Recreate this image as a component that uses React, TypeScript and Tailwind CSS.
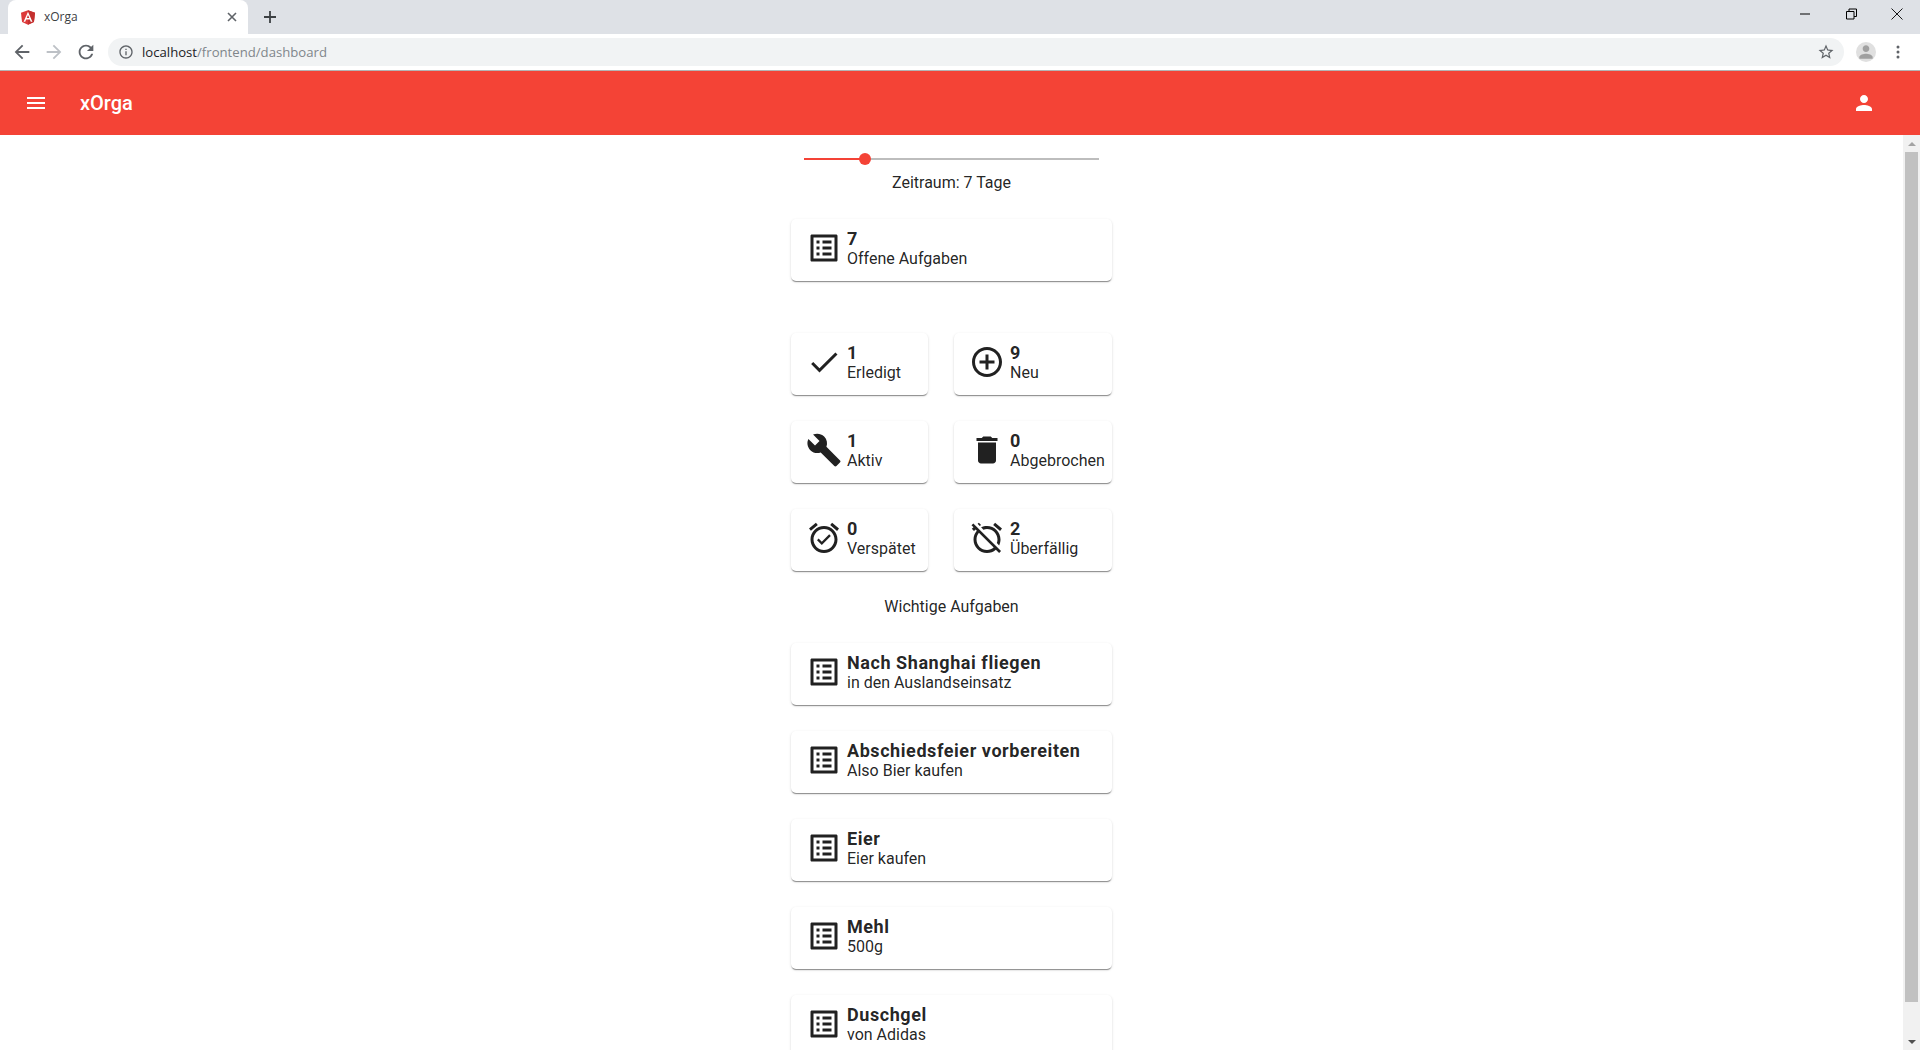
import React from "react";

const P = {
  list: "M19 5v14H5V5h14m1.1-2H3.9c-.5 0-.9.4-.9.9v16.2c0 .4.4.9.9.9h16.2c.4 0 .9-.5.9-.9V3.9c0-.5-.5-.9-.9-.9zM11 7h6v2h-6V7zm0 4h6v2h-6v-2zm0 4h6v2h-6zM7 7h2v2H7zm0 4h2v2H7zm0 4h2v2H7z",
  check: "M9 16.17L4.83 12l-1.42 1.41L9 19 21 7l-1.41-1.41z",
  add: "M13 7h-2v4H7v2h4v4h2v-4h4v-2h-4V7zm-1-5C6.48 2 2 6.48 2 12s4.48 10 10 10 10-4.48 10-10S17.52 2 12 2zm0 18c-4.41 0-8-3.59-8-8s3.59-8 8-8 8 3.59 8 8-3.59 8-8 8z",
  build: "M22.7 19l-9.1-9.1c.9-2.3.4-5-1.5-6.9-2-2-5-2.4-7.4-1.3L9 6 6 9 1.6 4.7C.4 7.1.9 10.1 2.9 12.1c1.9 1.9 4.6 2.4 6.9 1.5l9.1 9.1c.4.4 1 .4 1.4 0l2.3-2.3c.5-.4.5-1.1.1-1.4z",
  del: "M6 19c0 1.1.9 2 2 2h8c1.1 0 2-.9 2-2V7H6v12zM19 4h-3.5l-1-1h-5l-1 1H5v2h14V4z",
  alarmOn: "M22 5.72l-4.6-3.86-1.29 1.53 4.6 3.86L22 5.72zM7.88 3.39L6.6 1.86 2 5.71l1.29 1.53 4.59-3.85zM12 4c-4.97 0-9 4.03-9 9s4.02 9 9 9c4.97 0 9-4.03 9-9s-4.03-9-9-9zm0 16c-3.86 0-7-3.14-7-7s3.14-7 7-7 7 3.14 7 7-3.14 7-7 7zm-1.46-5.47L8.41 12.4l-1.06 1.06 3.18 3.18 6-6-1.06-1.06-4.93 4.95z",
  alarmOff: "M12 6c3.87 0 7 3.13 7 7 0 .84-.16 1.65-.43 2.4l1.52 1.52c.58-1.19.91-2.51.91-3.92 0-4.97-4.03-9-9-9-1.41 0-2.73.33-3.92.91L9.6 6.43C10.35 6.16 11.16 6 12 6zm10-.28l-4.6-3.86-1.29 1.53 4.6 3.86L22 5.72zM2.92 2.29L1.65 3.57 3 4.9l-1.11.93 1.42 1.42 1.11-.94.8.8C3.83 8.69 3 10.75 3 13c0 4.97 4.02 9 9 9 2.25 0 4.31-.83 5.89-2.2l2.2 2.2 1.27-1.27L3.89 3.27l-.97-.98zm13.55 16.1C15.26 19.39 13.7 20 12 20c-3.87 0-7-3.13-7-7 0-1.7.61-3.26 1.61-4.47l9.86 9.86zM8.02 3.28L6.6 1.86l-.86.71 1.42 1.42.86-.71z",
  person: "M12 12c2.21 0 4-1.79 4-4s-1.79-4-4-4-4 1.79-4 4 1.79 4 4 4zm0 2c-2.67 0-8 1.34-8 4v2h16v-2c0-2.66-5.33-4-8-4z",
  menu: "M3 18h18v-2H3v2zm0-5h18v-2H3v2zm0-7v2h18V6H3z",
  back: "M20 11H7.83l5.59-5.59L12 4l-8 8 8 8 1.41-1.41L7.83 13H20v-2z",
  forward: "M12 4l-1.41 1.41L16.17 11H4v2h12.17l-5.58 5.59L12 20l8-8z",
  reload: "M17.65 6.35C16.2 4.9 14.21 4 12 4c-4.42 0-7.99 3.58-7.99 8s3.57 8 7.99 8c3.73 0 6.84-2.55 7.73-6h-2.08c-.82 2.33-3.04 4-5.65 4-3.31 0-6-2.69-6-6s2.69-6 6-6c1.66 0 3.14.69 4.22 1.78L13 11h7V4l-2.35 2.35z",
  info: "M11 7h2v2h-2zm0 4h2v6h-2zm1-9C6.48 2 2 6.48 2 12s4.48 10 10 10 10-4.48 10-10S17.52 2 12 2zm0 18c-4.41 0-8-3.59-8-8s3.59-8 8-8 8 3.59 8 8-3.59 8-8 8z",
  star: "M22 9.24l-7.19-.62L12 2 9.19 8.63 2 9.24l5.46 4.73L5.82 21 12 17.27 18.18 21l-1.63-7.03L22 9.24zM12 15.4l-3.76 2.27 1-4.28-3.32-2.88 4.38-.38L12 6.1l1.71 4.04 4.38.38-3.32 2.88 1 4.28L12 15.4z",
};

function Icon({ d, size = 36, className = "" }: { d: string; size?: number; className?: string }) {
  return (
    <svg width={size} height={size} viewBox="0 0 24 24" className={`shrink-0 fill-current ${className}`}>
      <path d={d} />
    </svg>
  );
}

const cardCls =
  "flex items-center h-[62px] pl-[15px] pb-1 bg-white rounded-[5px] shadow-[0_2px_1px_-1px_rgba(0,0,0,0.3),0_1px_1px_0_rgba(0,0,0,0.14),0_1px_3px_0_rgba(0,0,0,0.12)]";

function Card({ icon, top, sub }: { icon: string; top: string; sub: string }) {
  return (
    <div className={cardCls}>
      <Icon d={icon} className="text-[#212121]" />
      <div className="ml-[5px] mt-[2px] whitespace-nowrap">
        <div className="text-[18px] leading-[20px] font-bold tracking-[0.57px]">{top}</div>
        <div className="text-[16px] leading-[20px]">{sub}</div>
      </div>
    </div>
  );
}

function Browser() {
  return (
    <div className="shrink-0 font-['Open_Sans',sans-serif]">
      <div className="h-[34px] bg-[#dee1e6] flex items-stretch">
        <div className="ml-2 w-[240px] h-[34px] bg-white rounded-t-[8px] flex items-center pl-3 pr-[9px]">
          <svg width="16" height="17" viewBox="0 0 250 250" className="shrink-0">
            <path fill="#dd3a3a" d="M125 10 15 50l17 145 93 45 93-45 17-145z" />
            <path fill="#c3302f" d="M125 10v230l93-45 17-145z" />
            <path fill="#fff" d="M125 36 56 190h26l14-34h58l14 34h26L125 36zm20 98h-40l20-48 20 48z" />
          </svg>
          <span className="ml-2 text-[12px] text-[#3c4043] flex-1">xOrga</span>
          <svg width="14" height="14" viewBox="0 0 14 14" className="shrink-0 stroke-[#5f6368]" strokeWidth="1.6">
            <path d="M3 3l8 8M11 3l-8 8" />
          </svg>
        </div>
        <svg width="14" height="14" viewBox="0 0 14 14" className="ml-[15px] mt-[10px] shrink-0 stroke-[#3c4043]" strokeWidth="1.8">
          <path d="M7 1v12M1 7h12" />
        </svg>
        <div className="flex-1" />
        <div className="flex items-start h-[28px] pt-[8px] pr-[16px] gap-[32px]">
          <svg width="14" height="12" viewBox="0 0 14 12" className="stroke-black" strokeWidth="1"><path d="M2 6h10" /></svg>
          <svg width="14" height="12" viewBox="0 0 14 12" fill="none" className="stroke-black" strokeWidth="1">
            <path d="M2.5 3.5h7.5v7.5H2.5zM5 3.5V1h7.5v7.5H10" />
          </svg>
          <svg width="14" height="12" viewBox="0 0 14 12" className="stroke-black" strokeWidth="0.9"><path d="M1.5.5l11 11M12.5.5l-11 11" /></svg>
        </div>
      </div>
      <div className="h-[37px] bg-white border-b border-[#b4b4b4] flex items-center">
        <Icon d={P.back} size={22} className="ml-[11px] text-[#5f6368]" />
        <Icon d={P.forward} size={22} className="ml-[10px] text-[#bdc1c6]" />
        <Icon d={P.reload} size={22} className="ml-[10px] text-[#5f6368]" />
        <div className="ml-[11px] flex-1 h-[28px] rounded-full bg-[#f1f3f4] flex items-center pl-[10px] pr-[9px]">
          <Icon d={P.info} size={16} className="text-[#5f6368]" />
          <span className="ml-2 mt-px text-[13.15px] flex-1 text-[#80868b]">
            <span className="text-[#202124]">localhost</span>/frontend/dashboard
          </span>
          <Icon d={P.star} size={18} className="text-[#5f6368]" />
        </div>
        <div className="ml-[12px] w-[20px] h-[20px] rounded-full bg-[#e0e0e0] overflow-hidden flex items-center justify-center">
          <Icon d={P.person} size={20} className="text-[#a0a0a0]" />
        </div>
        <svg width="4" height="14" viewBox="0 0 4 14" className="ml-[20px] mr-[20px] fill-[#5f6368]">
          <circle cx="2" cy="2" r="1.5" /><circle cx="2" cy="7" r="1.5" /><circle cx="2" cy="12" r="1.5" />
        </svg>
      </div>
    </div>
  );
}

function Scrollbar() {
  return (
    <div className="w-[17px] shrink-0 bg-[#f1f1f1] flex flex-col items-center">
      <div className="h-[17px] flex items-center justify-center">
        <div className="w-0 h-0 border-x-[4px] border-x-transparent border-b-[4px] border-b-[#a3a3a3]" />
      </div>
      <div className="w-[13px] bg-[#c1c1c1] h-[850px]" />
      <div className="flex-1" />
      <div className="h-[17px] flex items-center justify-center">
        <div className="w-0 h-0 border-x-[4px] border-x-transparent border-t-[4px] border-t-[#505050]" />
      </div>
    </div>
  );
}

export default function App() {
  const tasks = [
    ["Nach Shanghai fliegen", "in den Auslandseinsatz"],
    ["Abschiedsfeier vorbereiten", "Also Bier kaufen"],
    ["Eier", "Eier kaufen"],
    ["Mehl", "500g"],
    ["Duschgel", "von Adidas"],
  ];
  return (
    <div className="h-[1050px] w-[1920px] overflow-hidden flex flex-col bg-white text-[rgba(0,0,0,0.87)] font-['Roboto',sans-serif]">
      <Browser />
      <header className="h-[64px] shrink-0 bg-[#f44336] text-white flex items-center pl-6 pr-[44px]">
        <Icon d={P.menu} size={24} />
        <span className="ml-8 text-[20px] font-medium flex-1">xOrga</span>
        <Icon d={P.person} size={24} />
      </header>
      <div className="flex-1 min-h-0 flex">
        <main className="flex-1 min-w-0 overflow-hidden flex flex-col items-center">
          <div className="relative mt-[18px] w-[295px] h-[12px] flex items-center shrink-0">
            <div className="h-[2px] w-[61px] bg-[#f44336]" />
            <div className="h-[2px] flex-1 bg-[#bdbdbd]" />
            <div className="absolute left-[55px] top-0 w-[12px] h-[12px] rounded-full bg-[#f44336]" />
          </div>
          <div className="mt-[6px] text-[16px] leading-[24px] shrink-0">Zeitraum: 7 Tage</div>
          <div className="mt-[24px] w-[321px] shrink-0">
            <Card icon={P.list} top="7" sub="Offene Aufgaben" />
          </div>
          <div className="mt-[52px] grid grid-cols-[137px_158px] gap-x-[26px] gap-y-[26px] shrink-0">
            <Card icon={P.check} top="1" sub="Erledigt" />
            <Card icon={P.add} top="9" sub="Neu" />
            <Card icon={P.build} top="1" sub="Aktiv" />
            <Card icon={P.del} top="0" sub="Abgebrochen" />
            <Card icon={P.alarmOn} top="0" sub="Verspätet" />
            <Card icon={P.alarmOff} top="2" sub="Überfällig" />
          </div>
          <div className="mt-[24px] text-[16px] leading-[24px] shrink-0">Wichtige Aufgaben</div>
          <div className="mt-[24px] w-[321px] flex flex-col gap-[26px] shrink-0">
            {tasks.map(([a, b]) => (
              <Card key={a} icon={P.list} top={a} sub={b} />
            ))}
          </div>
        </main>
        <Scrollbar />
      </div>
    </div>
  );
}
